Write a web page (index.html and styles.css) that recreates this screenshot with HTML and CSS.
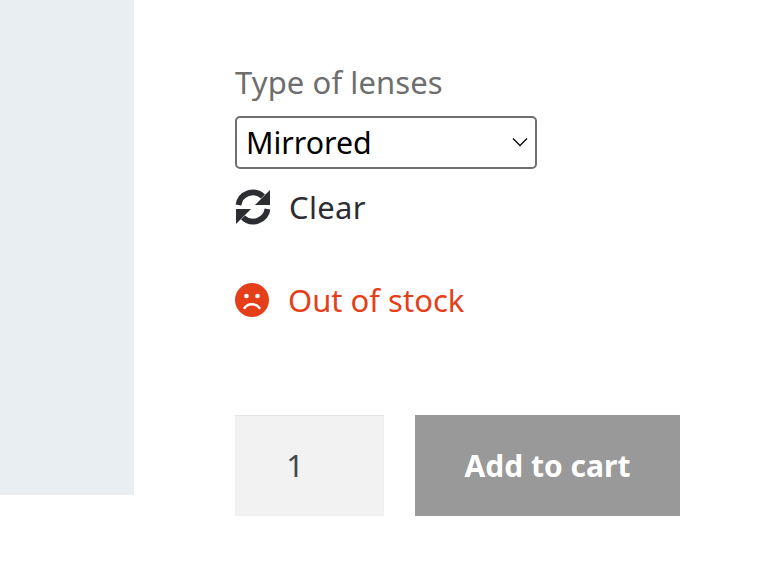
FILE: index.html
```html
<!DOCTYPE html>
<html lang="en">
<head>
    <meta charset="UTF-8">
    <meta name="viewport" content="width=device-width, initial-scale=1.0">
    <title>Product options</title>
    <link rel="stylesheet" href="styles.css">
</head>
<body>
    <div class="page">
        <div class="sidebar"></div>

        <div class="product">
            <label class="field-label" for="lenses">Type of lenses</label>
            <div class="select-wrap">
                <select class="select" id="lenses">
                    <option>Mirrored</option>
                </select>
                <svg class="chevron" viewBox="0 0 16 10" width="16" height="10">
                    <path d="M1 1.5l7 7 7-7" fill="none" stroke="#111" stroke-width="1.5"/>
                </svg>
            </div>

            <a class="clear" href="#">
                <svg class="clear-icon" viewBox="0 0 36 36">
                    <path d="M3.5 16A14.6 14.6 0 0 1 28 7.5" fill="none" stroke="#2b2d33" stroke-width="5.8"/>
                    <path d="M32.5 20A14.6 14.6 0 0 1 8 28.5" fill="none" stroke="#2b2d33" stroke-width="5.8"/>
                    <path d="M35 1v15H20z" fill="#2b2d33"/>
                    <path d="M1 35V20h15z" fill="#2b2d33"/>
                </svg>
                <span>Clear</span>
            </a>

            <div class="stock">
                <svg class="stock-icon" viewBox="0 0 34 34">
                    <circle cx="17" cy="17" r="17" fill="#e53f1a"/>
                    <circle cx="11.5" cy="13" r="2.3" fill="#fff"/>
                    <circle cx="22.5" cy="13" r="2.3" fill="#fff"/>
                    <path d="M9.5 25c3.6-5 11.4-5 15 0" fill="none" stroke="#fff" stroke-width="2.4" stroke-linecap="round"/>
                </svg>
                <span>Out of stock</span>
            </div>

            <div class="cart">
                <input class="qty" type="text" value="1">
                <button class="add" type="button">Add to cart</button>
            </div>
        </div>
    </div>
</body>
</html>
```

FILE: styles.css
```css
body {
    margin: 0;
    background: #fff;
    font-family: "Noto Sans", "Open Sans", sans-serif;
}
.page {
    display: flex;
    align-items: flex-start;
}
.sidebar {
    width: 134px;
    height: 495px;
    background: #e9eef2;
}
.product {
    margin-left: 101px;
    padding-top: 62px;
    width: 445px;
}
.field-label {
    display: block;
    font-size: 31px;
    line-height: 40px;
    letter-spacing: 0.1px;
    color: #6e6e6e;
    margin-bottom: 14px;
}
.select-wrap {
    position: relative;
    width: 302px;
}
.select {
    display: block;
    appearance: none;
    box-sizing: border-box;
    width: 100%;
    height: 53px;
    padding: 0 9px 1px;
    background: #fff;
    border: 2px solid #6f6f6f;
    border-radius: 5px;
    font-family: inherit;
    font-size: 30.3px;
    color: #000;
}
.chevron {
    position: absolute;
    right: 9px;
    top: 21px;
}
.clear {
    display: flex;
    align-items: center;
    gap: 18px;
    margin-top: 20px;
    color: #2b2d33;
    font-size: 31px;
    line-height: 36px;
    letter-spacing: 0.3px;
    text-decoration: none;
}
.clear-icon {
    width: 36px;
    height: 36px;
}
.stock {
    display: flex;
    align-items: center;
    gap: 19px;
    margin-top: 58px;
    color: #e53f1a;
    font-size: 31px;
    line-height: 34px;
}
.stock-icon {
    width: 34px;
    height: 34px;
}
.cart {
    display: flex;
    gap: 31px;
    margin-top: 98px;
}
.qty {
    box-sizing: border-box;
    width: 149px;
    height: 101px;
    padding: 0 29px 2px 0;
    border: 1px solid #efefef;
    border-top-color: #e2e2e2;
    background: #f2f2f2;
    font-family: inherit;
    font-size: 31px;
    color: #43454b;
    text-align: center;
}
.add {
    width: 265px;
    height: 101px;
    border: none;
    background: #999;
    color: #fff;
    font-family: inherit;
    font-size: 30px;
    font-weight: 700;
}
```
